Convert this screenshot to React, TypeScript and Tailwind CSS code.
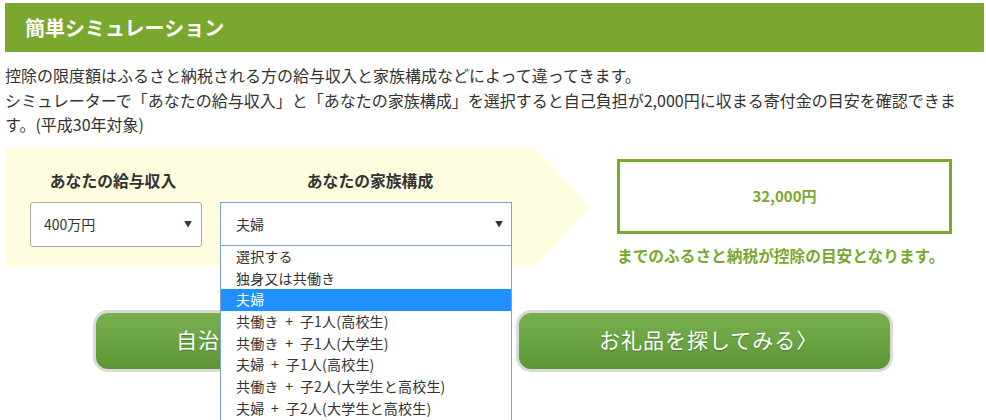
import React from "react";

const font = "font-['Noto_Sans_CJK_JP','Noto_Sans',sans-serif]";

const options = [
  "選択する",
  "独身又は共働き",
  "夫婦",
  "共働き + 子1人(高校生)",
  "共働き + 子1人(大学生)",
  "夫婦 + 子1人(高校生)",
  "共働き + 子2人(大学生と高校生)",
  "夫婦 + 子2人(大学生と高校生)",
  "共働き + 子2人(大学生と中学生)",
];

function GreenButton({ label }: { label: string }) {
  return (
    <div className="w-[377px] h-[62px] rounded-[15px] border-[3px] border-[#d9dbd6] bg-[#e4e6e1]">
      <div className="h-full w-full rounded-[12px] bg-gradient-to-b from-[#78af4e] via-[#6aa442] to-[#5d9434] flex items-center pl-[80px] pb-[3px] text-white text-[21px] leading-none tracking-[1px] [text-shadow:0_1px_1px_rgba(0,0,0,0.25)]">
        {label}
      </div>
    </div>
  );
}

export default function App() {
  return (
    <div className={`${font} relative bg-white w-[986px] h-[420px] overflow-hidden pt-[3px] px-[5px] text-[#333]`}>
      <div className="h-[49px] w-[979px] bg-[#7aa72e] flex items-center pl-[20px]">
        <h2 className="text-white font-bold text-[20px] leading-none">簡単シミュレーション</h2>
      </div>

      <p className="mt-[11px] text-[16px] leading-[24.5px] text-[#333] whitespace-nowrap">
        控除の限度額はふるさと納税される方の給与収入と家族構成などによって違ってきます。
        <br />
        シミュレーターで「あなたの給与収入」と「あなたの家族構成」を選択すると自己負担が2,000円に収まる寄付金の目安を確認できま
        <br />
        す。(平成30年対象)
      </p>

      <div className="mt-[11px] flex items-start">
        <div className="w-[585px] h-[119px] bg-[#fefde0] [clip-path:polygon(0_0,530px_0,585px_50%,530px_100%,0_100%)] flex pl-[25px] pt-[23px] gap-[18px]">
          <div className="flex flex-col items-center w-[172px]">
            <div className="font-bold text-[15.8px] leading-[20px] text-[#333] ml-[-6px]">あなたの給与収入</div>
            <div className="mt-[11px] w-[172px] h-[45px] bg-white border border-[#aaa] rounded-[3px] flex items-center justify-between pl-[13px] pr-[9px] text-[14px]">
              <span>400万円</span>
              <span className="text-[8px] text-[#333]">▼</span>
            </div>
          </div>
          <div className="flex flex-col items-center w-[292px]">
            <div className="font-bold text-[15.8px] leading-[20px] text-[#333] ml-[8px]">あなたの家族構成</div>
            <div className="mt-[11px] w-[292px] h-[45px] bg-white border border-[#7fa0dc] flex items-center justify-between pl-[15px] pr-[8px] text-[14px]">
              <span>夫婦</span>
              <span className="text-[8px] text-[#333]">▼</span>
            </div>
          </div>
        </div>

        <div className="ml-[27px] mt-[11px] flex flex-col">
          <div className="w-[335px] h-[75px] border-[3px] border-[#7aa72e] flex items-center justify-center">
            <span className="font-bold text-[15px] text-[#7aa72e]">32,000円</span>
          </div>
          <div className="mt-[12px] font-bold text-[15.7px] leading-[20px] text-[#7aa72e] whitespace-nowrap">
            までのふるさと納税が控除の目安となります。
          </div>
        </div>
      </div>

      <div className="mt-[43px] flex justify-center gap-[46px]">
        <GreenButton label="自治体を探してみる〉" />
        <GreenButton label="お礼品を探してみる〉" />
      </div>

      <div className="absolute left-[220px] top-[245px] w-[292px] h-[190px] bg-white border border-[#7f9fd8] z-10 overflow-hidden">
        {options.map((o, i) => (
          <div
            key={o}
            className={`h-[21.7px] leading-[21.7px] pl-[15px] text-[14px] tracking-[0.2px] whitespace-pre ${
              i === 2 ? "bg-[#1e90ff] text-white" : "text-[#333]"
            }`}
          >
            {o.replace(/ \+ /g, "  +  ")}
          </div>
        ))}
      </div>
    </div>
  );
}
